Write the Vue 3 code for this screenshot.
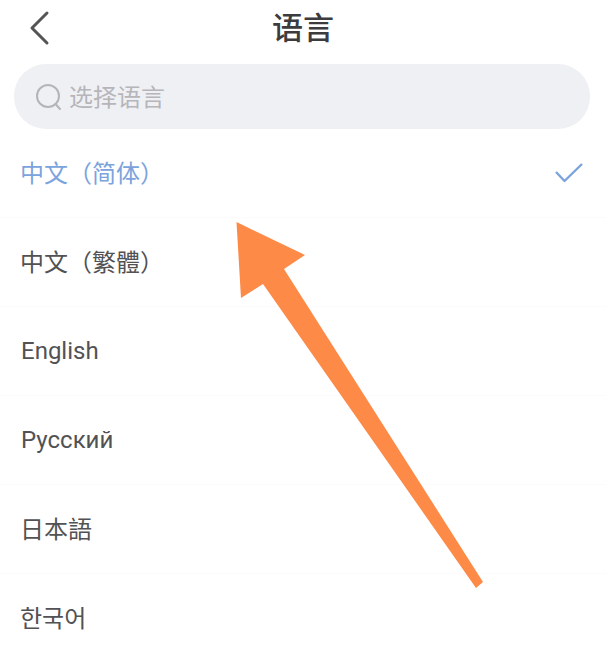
<script setup>
const rows = [
  { label: '中文（简体）', active: true, cjk: true },
  { label: '中文（繁體）', cjk: true },
  { label: 'English' },
  { label: 'Русский' },
  { label: '日本語', cjk: true },
  { label: '한국어', cjk: true }
]
</script>

<template>
  <div class="page">
    <header class="nav">
      <svg class="back" viewBox="0 0 24 36" width="24" height="36">
        <path d="M20 3 L5 18 L20 33" fill="none" stroke="#555" stroke-width="3" stroke-linecap="round" stroke-linejoin="round" />
      </svg>
      <h1 class="title">语言</h1>
    </header>
    <div class="search">
      <svg class="lens" viewBox="0 0 28 28" width="28" height="28">
        <circle cx="13" cy="13" r="11" fill="none" stroke="#b4b4b9" stroke-width="2" />
        <path d="M20.5 21 L25 26" fill="none" stroke="#b4b4b9" stroke-width="2" stroke-linecap="round" />
      </svg>
      <span class="placeholder">选择语言</span>
    </div>
    <ul class="list">
      <li v-for="row in rows" :key="row.label" class="row" :class="{ active: row.active }">
        <span :class="{ cjk: row.cjk }">{{ row.label }}</span>
        <svg v-if="row.active" class="check" viewBox="0 0 30 24" width="30" height="24">
          <path d="M2 11 L10.5 20 L28 3" fill="none" stroke="#7ba3dd" stroke-width="2.4" stroke-linejoin="round" />
        </svg>
      </li>
    </ul>
    <svg class="arrow" viewBox="0 0 606 653" width="606" height="653">
      <polygon points="236.5,222 305,255 284,269 483,582 476,588 263,284 241,298" fill="#fd8a47" />
    </svg>
  </div>
</template>

<style scoped>
.page {
  position: relative;
  width: 606px;
  height: 653px;
  overflow: hidden;
  background: #fff;
  font-family: "Noto Sans CJK SC", "Noto Sans", sans-serif;
}
.nav {
  position: relative;
  display: flex;
  align-items: center;
  justify-content: center;
  height: 58px;
  padding-bottom: 6px;
  box-sizing: border-box;
}
.back {
  position: absolute;
  left: 27px;
  top: 10px;
}
.title {
  margin: 0;
  font-size: 31px;
  font-weight: 500;
  color: #3c3c3e;
  line-height: 52px;
}
.search {
  display: flex;
  align-items: center;
  gap: 6px;
  height: 65px;
  margin: 6px 16px 0 14px;
  padding-left: 21px;
  border-radius: 32px;
  background: #eff0f4;
}
.placeholder {
  font-size: 24px;
  color: #b5b5ba;
  padding-bottom: 2px;
}
.list {
  margin: 0;
  padding: 0;
  list-style: none;
}
.row {
  display: flex;
  align-items: center;
  justify-content: space-between;
  height: 89px;
  padding: 0 22px 0 21px;
  box-sizing: border-box;
  border-bottom: 1px solid #fbfbfb;
  font-family: Roboto, "Noto Sans CJK SC", sans-serif;
  font-size: 24px;
  color: #525254;
}
.cjk {
  padding-bottom: 4px;
  margin-left: -1px;
}
.active {
  color: #7ba3dd;
}
.arrow {
  position: absolute;
  left: 0;
  top: 0;
  pointer-events: none;
}
</style>
